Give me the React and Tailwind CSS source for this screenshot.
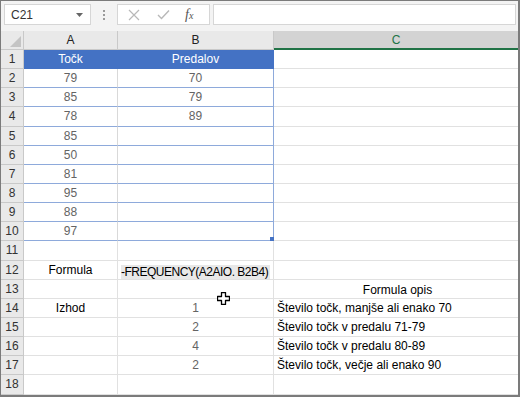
import React from 'react';

const rows = [
  { a: 'Točk', b: 'Predalov', head: true },
  { a: '79', b: '70', t: true },
  { a: '85', b: '79', t: true },
  { a: '78', b: '89', t: true },
  { a: '85', t: true },
  { a: '50', t: true },
  { a: '81', t: true },
  { a: '95', t: true },
  { a: '88', t: true },
  { a: '97', t: true, last: true },
  {},
  { a: 'Formula', aDark: true, formula: '-FREQUENCY(A2AIO. B2B4)' },
  { c: 'Formula opis', cCenter: true },
  { a: 'Izhod', aDark: true, b: '1', c: 'Število točk, manjše ali enako 70' },
  { b: '2', c: 'Število točk v predalu 71-79' },
  { b: '4', c: 'Število točk v predalu 80-89' },
  { b: '2', c: 'Število točk, večje ali enako 90' },
  {},
];

const Row = ({ r, i }) => {
  const blue = r.t || r.head;
  return (
    <div className="flex h-[19.15px]">
      <div className="w-[23px] shrink-0 bg-[#e9e9e9] border-r border-b border-[#c9c9c9] flex items-center justify-center text-[12px] text-[#333]">
        {i + 1}
      </div>
      <div
        className={
          'w-[94px] shrink-0 flex items-center justify-center border-r border-b ' +
          (r.head
            ? 'bg-[#4472c4] border-r-[#4472c4] border-b-[#4472c4] text-white'
            : blue
            ? 'border-r-[#d9d9d9] border-b-[#8eaadb] ' + (r.aDark ? 'text-black' : 'text-[#646464]')
            : 'border-[#e1e1e1] ' + (r.aDark ? 'text-black' : 'text-[#646464]'))
        }
      >
        {r.a}
      </div>
      <div
        className={
          'relative w-[156px] shrink-0 flex items-center justify-center border-r border-b ' +
          (r.head
            ? 'bg-[#4472c4] border-[#4472c4] text-white'
            : blue
            ? 'border-[#8eaadb] text-[#646464]'
            : 'border-[#e1e1e1] text-[#646464]')
        }
      >
        {r.formula ? (
          <div className="absolute left-[3px] right-[3px] top-[4px] bottom-0 bg-[#e8e8e8] flex items-center text-black tracking-[-0.5px] leading-none">
            {r.formula}
          </div>
        ) : (
          r.b
        )}
        {r.last && <div className="absolute right-[-1px] bottom-[-1px] w-[4px] h-[4px] bg-[#4472c4]" />}
      </div>
      <div
        className={
          'flex-1 flex items-center border-b border-[#e1e1e1] text-black pl-[3px] ' +
          (r.cCenter ? 'justify-center pt-[2px]' : '')
        }
      >
        {r.c}
      </div>
    </div>
  );
};

export default function App() {
  return (
    <div
      className="relative w-[520px] h-[397px] overflow-hidden bg-white border-l border-t border-r-2 border-b-2 border-[#7b7b7b] text-[12px]"
      style={{ fontFamily: '"Liberation Sans", Arial, sans-serif' }}
    >
      {/* formula bar */}
      <div className="h-[30px] bg-[#f3f3f3] flex items-start pt-[3px] pl-[3px] pr-[2px]">
        <div className="w-[87px] h-[21px] bg-white border border-[#d6d6d6] flex items-center justify-between pl-[6px] pr-[7px] text-[#333]">
          <span>C21</span>
          <svg width="7" height="4" viewBox="0 0 7 4"><path d="M0 0h7L3.5 4z" fill="#666" /></svg>
        </div>
        <div className="w-[26px] h-[21px] flex flex-col items-center justify-center gap-[2px]">
          <div className="w-[2px] h-[2px] bg-[#9a9a9a]" />
          <div className="w-[2px] h-[2px] bg-[#9a9a9a]" />
          <div className="w-[2px] h-[2px] bg-[#9a9a9a]" />
        </div>
        <div className="w-[93px] h-[21px] bg-white border border-[#d6d6d6] flex items-center pl-[9px]">
          <svg width="12" height="12" viewBox="0 0 12 12" className="ml-[1px]">
            <path d="M1 1L11 11M11 1L1 11" stroke="#b8b8b8" strokeWidth="1.2" />
          </svg>
          <svg width="13" height="11" viewBox="0 0 13 11" className="ml-[17px]">
            <path d="M1 6L4.5 9.5L12 1.5" stroke="#b8b8b8" strokeWidth="1.4" fill="none" />
          </svg>
          <span
            className="ml-[15px] italic text-[#555] text-[14px]"
            style={{ fontFamily: '"Liberation Serif", "Times New Roman", serif' }}
          >
            f<span className="text-[10px]">x</span>
          </span>
        </div>
        <div className="flex-1 ml-[3px] h-[21px] bg-white border border-[#d6d6d6]" />
      </div>
      {/* column headers */}
      <div className="flex h-[19px] bg-[#e9e9e9]">
        <div className="relative w-[23px] shrink-0 border-r border-b border-[#c9c9c9]">
          <svg width="11" height="11" viewBox="0 0 11 11" className="absolute right-[2px] bottom-[2px]">
            <path d="M11 0V11H0z" fill="#c4c4c4" />
          </svg>
        </div>
        <div className="w-[94px] shrink-0 border-r border-b border-[#c9c9c9] flex items-center justify-center text-[#222]">A</div>
        <div className="w-[156px] shrink-0 border-r border-b border-[#c9c9c9] flex items-center justify-center text-[#222]">B</div>
        <div className="flex-1 bg-[#d3d3d3] border-b-2 border-[#217346] flex items-center justify-center text-[#217346]">C</div>
      </div>
      {rows.map((r, i) => (
        <Row key={i} r={r} i={i} />
      ))}
      {/* cursor */}
      <svg width="13" height="13" viewBox="0 0 13 13" className="absolute left-[216px] top-[291px]">
        <path d="M4.5 0.5h4v4h4v4h-4v4h-4v-4h-4v-4h4z" fill="white" stroke="black" strokeWidth="1.3" strokeLinejoin="round" />
      </svg>
    </div>
  );
}
